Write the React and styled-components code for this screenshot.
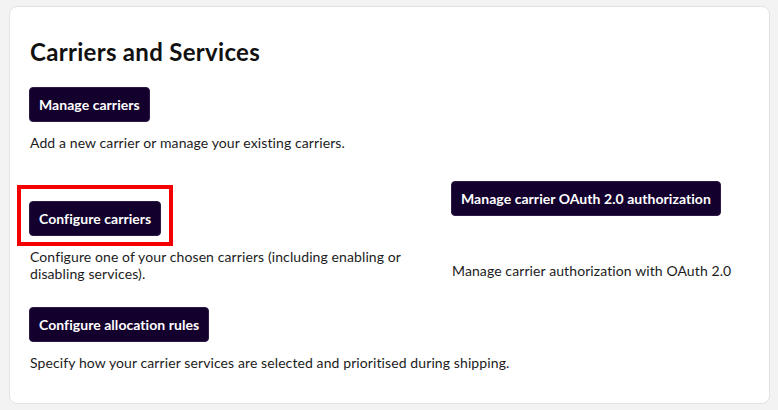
import React from "react";
import styled, { createGlobalStyle } from "styled-components";

const GlobalStyle = createGlobalStyle`
  html, body {
    margin: 0;
    padding: 0;
    background: #f3f3f3;
  }
  body {
    font-family: Lato, "Noto Sans", sans-serif;
    color: #1c1c1c;
  }
`;

const Page = styled.div`
  padding: 6px 8px 8px 9px;
`;

const Card = styled.section`
  background: #ffffff;
  border: 1px solid #e2e2e2;
  border-radius: 8px;
  padding: 29px 19px 32px 19px;
`;

const Title = styled.h2`
  margin: 0 0 19px;
  padding-left: 1px;
  font-size: 24px;
  line-height: 32px;
  font-weight: 700;
  letter-spacing: 0.3px;
  color: #111111;
`;

const Section = styled.div`
  display: flex;
  flex-direction: column;
  align-items: flex-start;
  gap: 12px;
  justify-content: ${(p) => (p.$spread ? "space-between" : "flex-start")};
  margin-top: ${(p) => p.$top || 0}px;
  padding-bottom: ${(p) => p.$bottom || 0}px;
`;

const Row = styled.div`
  display: grid;
  grid-template-columns: 400px 1fr;
  column-gap: 22px;
  margin: 30px 0 25px;
`;

const Button = styled.button`
  background: #13002d;
  color: #ffffff;
  border: 1px solid #2a1a45;
  border-radius: 4px;
  height: 35px;
  padding: 0 9px;
  font-family: Lato, "Noto Sans", sans-serif;
  font-size: 14px;
  font-weight: 700;
  letter-spacing: 0.05px;
  cursor: pointer;
`;

const Highlight = styled.div`
  position: relative;

  &::after {
    content: "";
    position: absolute;
    top: -16px;
    left: -12px;
    right: -12px;
    bottom: -10px;
    border: 4px solid #f50000;
    pointer-events: none;
  }
`;

const Desc = styled.p`
  margin: 0;
  padding-left: 1px;
  font-size: 14px;
  line-height: 17px;
  letter-spacing: 0.1px;
  color: #1c1c1c;
`;

const App = () => {
  return (
    <>
      <GlobalStyle />
      <Page>
        <Card>
          <Title>Carriers and Services</Title>
          <Section>
            <Button>Manage carriers</Button>
            <Desc>Add a new carrier or manage your existing carriers.</Desc>
          </Section>
          <Row>
            <Section $top={20}>
              <Highlight>
                <Button>Configure carriers</Button>
              </Highlight>
              <Desc>
                Configure one of your chosen carriers (including enabling or
                disabling services).
              </Desc>
            </Section>
            <Section $spread $bottom={3}>
              <Button>Manage carrier OAuth 2.0 authorization</Button>
              <Desc>Manage carrier authorization with OAuth 2.0</Desc>
            </Section>
          </Row>
          <Section>
            <Button>Configure allocation rules</Button>
            <Desc>
              Specify how your carrier services are selected and prioritised
              during shipping.
            </Desc>
          </Section>
        </Card>
      </Page>
    </>
  );
};

export default App;
